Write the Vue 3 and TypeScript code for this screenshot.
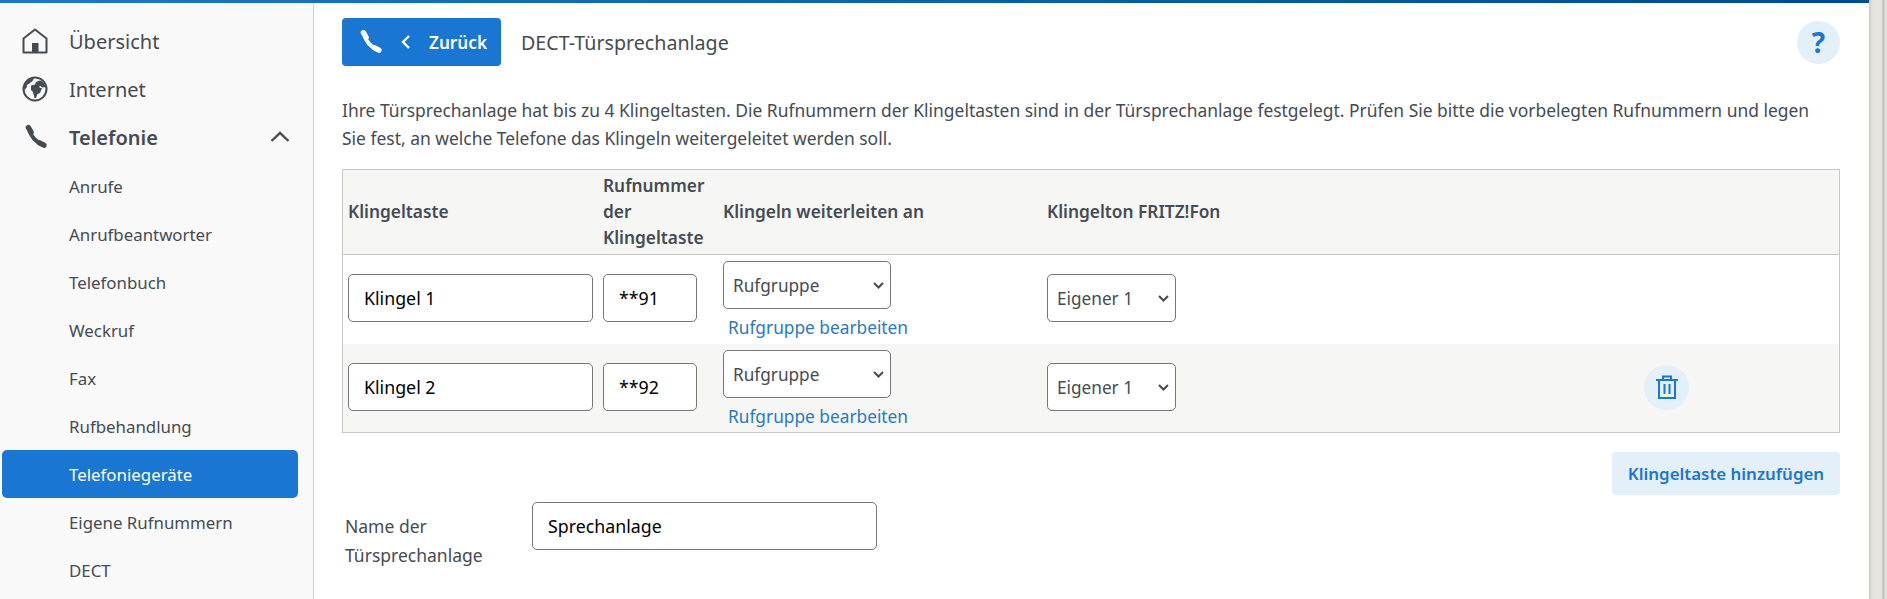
<script setup lang="ts">
const subItems = ['Anrufe', 'Anrufbeantworter', 'Telefonbuch', 'Weckruf', 'Fax', 'Rufbehandlung', 'Telefoniegeräte', 'Eigene Rufnummern', 'DECT']
const rows = [
  { name: 'Klingel 1', num: '**91', del: false },
  { name: 'Klingel 2', num: '**92', del: true },
]
</script>

<template>
  <div class="page">
    <div class="topbar"></div>
    <div class="body">
      <nav class="side">
        <a class="main">
          <svg class="mi" viewBox="0 0 26 26"><path d="M1.500 24.500V10.500L13 1.500l11.500 9v14z" fill="none" stroke="#454b52" stroke-width="2" stroke-linejoin="round"/><rect x="10" y="15" width="6.500" height="9" fill="#454b52"/></svg>
          <span>Übersicht</span>
        </a>
        <a class="main">
          <svg class="mi" viewBox="0 0 26 26"><circle cx="13" cy="13" r="11.500" fill="#f9f9f9" stroke="#454b52" stroke-width="2"/><path d="M2 11L4 6l5-3 3-1-1 2.500L8 7 5 9l-.500 3L2 14zM9 9.500l4-1 1-2.500 4-1.500L21 6l3 5-4 .500-1.500-1.500-1.500.500 1 1.500h2l-2 5-2.500 1L14 22h-1.500L11 16l-2-2z" fill="#454b52"/></svg>
          <span>Internet</span>
        </a>
        <a class="main open">
          <svg class="mi mi-phone" viewBox="0 0 24 24"><g fill="none" stroke="#454b52" stroke-linecap="round"><path d="M5.500 3.900L7.800 8M15 17l3.800 2" stroke-width="4.600"/><path d="M6.500 6C7.500 11.500 12 16.500 18 18.500" stroke-width="3.500"/></g></svg>
          <span class="grow">Telefonie</span>
          <svg class="chev" viewBox="0 0 20 12"><path d="M1.500 10L10 2l8.500 8" fill="none" stroke="#454b52" stroke-width="2.400"/></svg>
        </a>
        <a v-for="s in subItems" :key="s" class="sub" :class="{ active: s === 'Telefoniegeräte' }">{{ s }}</a>
      </nav>
      <main class="content">
        <header class="head">
          <button class="back">
            <svg class="bphone" viewBox="0 0 24 24"><g fill="none" stroke="#fff" stroke-linecap="round"><path d="M5.500 3.900L7.800 8M15 17l3.800 2" stroke-width="4.600"/><path d="M6.500 6C7.500 11.500 12 16.500 18 18.500" stroke-width="3.500"/></g></svg>
            <svg class="bchev" viewBox="0 0 10 16"><path d="M8 2L2 8l6 6" fill="none" stroke="#fff" stroke-width="2.400"/></svg>
            <span>Zurück</span>
          </button>
          <h1>DECT-Türsprechanlage</h1>
          <button class="help">?</button>
        </header>
        <p class="intro">Ihre Türsprechanlage hat bis zu 4 Klingeltasten. Die Rufnummern der Klingeltasten sind in der Türsprechanlage festgelegt. Prüfen Sie bitte die vorbelegten Rufnummern und legen Sie fest, an welche Telefone das Klingeln weitergeleitet werden soll.</p>
        <div class="table">
          <div class="row thead">
            <div>Klingeltaste</div>
            <div>Rufnummer der Klingeltaste</div>
            <div>Klingeln weiterleiten an</div>
            <div>Klingelton FRITZ!Fon</div>
            <div></div>
          </div>
          <div v-for="r in rows" :key="r.name" class="row tr" :class="{ alt: r.del }">
            <input class="inp" :value="r.name" />
            <input class="inp" :value="r.num" />
            <div class="fwd">
              <select class="sel sel1"><option>Rufgruppe</option></select>
              <a class="link">Rufgruppe bearbeiten</a>
            </div>
            <select class="sel sel2"><option>Eigener 1</option></select>
            <div class="act">
              <button v-if="r.del" class="trash">
                <svg viewBox="0 0 24 26" width="24" height="26"><path d="M1 6h22M8 5.500V2.500h8v3M4 6v18h16V6M9.500 10v10M14.500 10v10" fill="none" stroke="#1976d2" stroke-width="2"/></svg>
              </button>
            </div>
          </div>
        </div>
        <div class="addrow"><button class="add">Klingeltaste hinzufügen</button></div>
        <div class="namerow">
          <label>Name der Türsprechanlage</label>
          <input class="inp nameinp" value="Sprechanlage" />
        </div>
      </main>
      <div class="scroll"></div>
    </div>
  </div>
</template>

<style>
html, body { margin: 0; padding: 0; overflow: hidden; background: #fff; }
</style>

<style scoped>
.page { width: 1887px; height: 599px; overflow: hidden; font-family: "Noto Sans", sans-serif; color: #454b52; display: flex; flex-direction: column; }
.topbar { height: 3px; width: 1869px; background: linear-gradient(90deg, #1976d2, #004b92); flex: none; }
.body { flex: 1; display: flex; min-height: 0; }
.side { width: 313px; flex: none; background: #f9f9f9; border-right: 1px solid #d4d4d4; padding-top: 14px; box-sizing: content-box; }
.main { display: flex; align-items: center; height: 48px; font-size: 20px; padding-left: 22px; }
.mi { width: 26px; height: 26px; margin-right: 21px; flex: none; }
.mi-phone { width: 28px; height: 28px; margin-right: 19px; }
.open { font-weight: 600; margin-bottom: 1px; }
.grow { flex: 1; }
.chev { width: 20px; height: 12px; margin-right: 23px; }
.sub { display: flex; align-items: center; height: 48px; font-size: 16.850px; margin-left: 2px; width: 296px; box-sizing: border-box; padding-left: 67px; border-radius: 5px; }
.sub.active { background: #1976d2; color: #fff; }
.content { flex: 1; min-width: 0; padding: 15px 29px 0 28px; box-sizing: border-box; }
.head { display: flex; align-items: center; height: 48px; }
.back { width: 159px; height: 48px; background: #1976d2; border: 0; border-radius: 4px; color: #fff; font: 600 17.200px "Noto Sans", sans-serif; display: flex; align-items: center; padding: 0 0 0 14.500px; box-sizing: border-box; }
.bphone { width: 28px; height: 28px; flex: none; margin-right: 16.500px; }
.bchev { width: 10px; height: 16px; flex: none; margin-right: 18px; }
h1 { flex: 1; margin: 0 0 0 20px; font-size: 19.650px; font-weight: 400; }
.help { width: 43px; height: 43px; border: 0; border-radius: 50%; background: #e3eff9; color: #1976d2; font: 700 28px "Noto Sans", sans-serif; padding: 0; }
.intro { margin: 30px 0 17px; padding-right: 20px; font-size: 17.450px; line-height: 28px; }
.table { border: 1px solid #c8c8c8; }
.row { display: grid; grid-template-columns: 255px 120px 324px 597px 1fr; padding-left: 5px; align-items: center; }
.thead { background: #f6f6f4; border-bottom: 1px solid #c8c8c8; height: 84px; font-weight: 600; font-size: 17.300px; line-height: 26px; }
.tr { height: 89px; padding-bottom: 3px; box-sizing: border-box; background: #fff; }
.alt { background: #f6f6f4; height: 88px; padding-bottom: 2px; }
.inp { height: 48px; box-sizing: border-box; border: 1px solid #767676; border-radius: 5px; padding: 0 15px; font: 17.800px "Noto Sans", sans-serif; color: #000; background: #fff; outline: 0; }
.tr > .inp:nth-child(1) { width: 245px; }
.tr > .inp:nth-child(2) { width: 94px; }
.fwd { display: flex; flex-direction: column; align-items: flex-start; align-self: start; margin-top: 6px; }
.sel { appearance: none; height: 48px; box-sizing: border-box; border: 1px solid #767676; border-radius: 5px; color: #454b52; font: 17.200px "Noto Sans", sans-serif; padding: 0 24px 0 9px; background: #fff url("data:image/svg+xml,%3Csvg xmlns='http://www.w3.org/2000/svg' width='11' height='7' viewBox='0 0 11 7'%3E%3Cpath d='M1 1l4.500 4.500L10 1' fill='none' stroke='%23454b52' stroke-width='2'/%3E%3C/svg%3E") no-repeat right 6px center; }
.sel1 { width: 168px; }
.sel2 { width: 129px; }
.link { color: #2a7ac0; font-size: 17.300px; line-height: 26px; margin: 6px 0 0 5px; white-space: nowrap; }
.act { display: flex; }
.trash { width: 45px; height: 45px; border: 0; border-radius: 50%; background: #e3eff9; padding: 0; display: flex; align-items: center; justify-content: center; }
.addrow { display: flex; justify-content: flex-end; margin-top: 19px; }
.add { width: 228px; height: 43px; border: 0; border-radius: 4px; background: #e3eff9; color: #1976d2; font: 600 16.900px "Noto Sans", sans-serif; padding: 0; }
.namerow { display: flex; align-items: flex-start; margin-top: 7px; }
label { width: 190px; padding-left: 3px; box-sizing: border-box; font-size: 17.500px; line-height: 29px; padding-top: 10px; }
.nameinp { width: 345px; }
.scroll { width: 18px; flex: none; margin-top: -3px; background: linear-gradient(90deg, #cfcdc7 0, #e6e4de 4px, #e6e4de 13px, #b9b7b1 14px, #e0ded8 16px); }
</style>
